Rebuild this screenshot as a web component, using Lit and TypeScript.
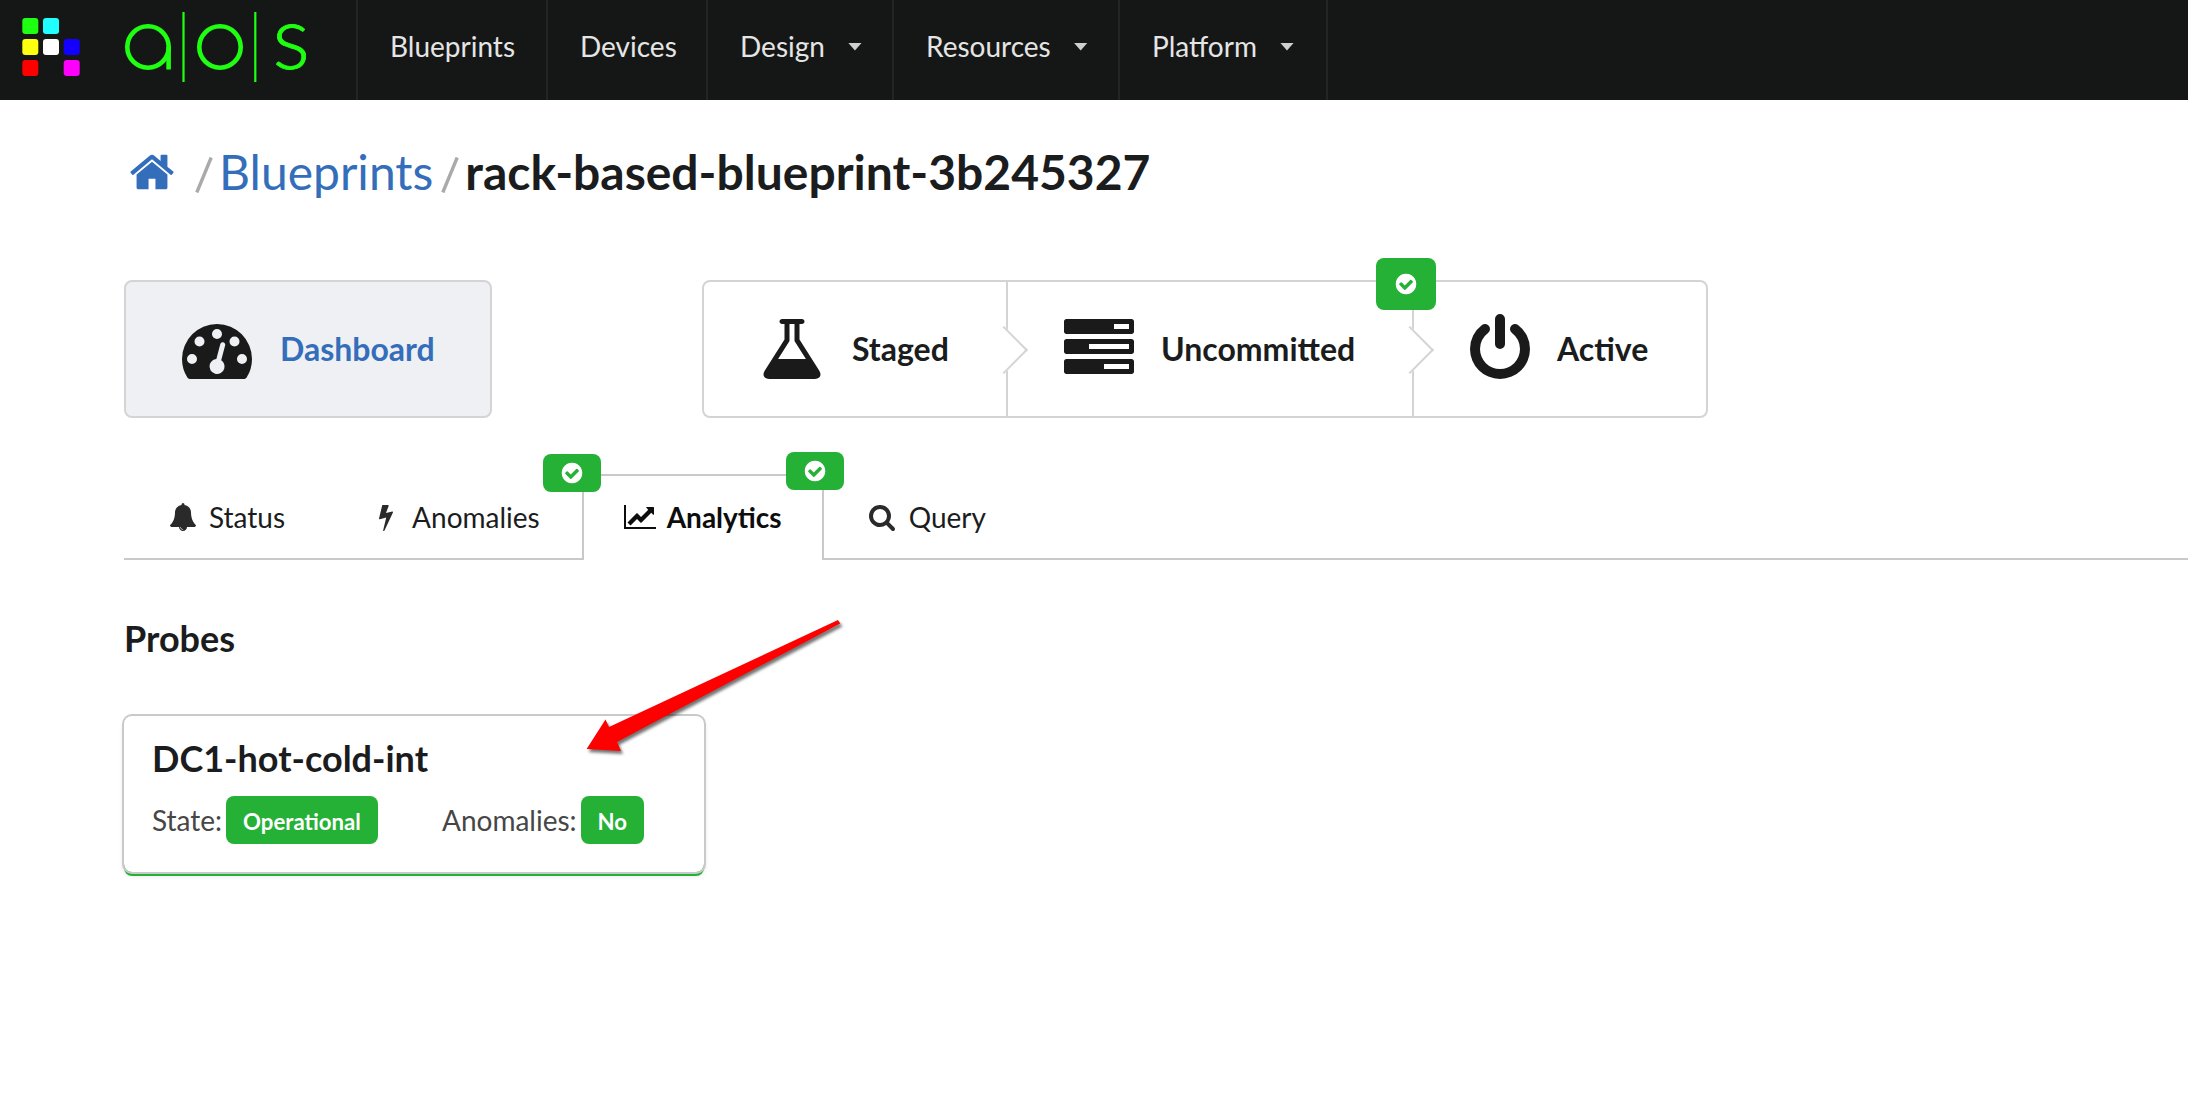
import { LitElement, html, svg, css } from "lit";
import { customElement, property } from "lit/decorators.js";

interface Glyph {
  box: string;
  d: string;
}

const GLYPHS: Record<string, Glyph> = {
  home: {
    box: "0 0 1792 1792",
    d: "M1472 992v480q0 26-19 45t-45 19h-384v-384h-256v384h-384q-26 0-45-19t-19-45v-480q0-1 .5-3t.5-3l575-474 575 474q1 2 1 6zm223-69l-62 74q-8 9-21 11h-3q-13 0-21-7l-692-577-692 577q-12 8-24 7-13-2-21-11l-62-74q-8-10-7-23.5t11-21.5l719-599q32-26 76-26t76 26l244 204v-195q0-14 9-23t23-9h192q14 0 23 9t9 23v408l219 182q10 8 11 21.5t-7 23.5z",
  },
  gauge: {
    box: "0 0 1792 1792",
    d: "M384 1152q0-53-37.5-90.5t-90.5-37.5-90.5 37.5-37.5 90.5 37.5 90.5 90.5 37.5 90.5-37.5 37.5-90.5zm192-448q0-53-37.5-90.5t-90.5-37.5-90.5 37.5-37.5 90.5 37.5 90.5 90.5 37.5 90.5-37.5 37.5-90.5zm428 481l101-382q6-26-7.5-48.5t-38.5-29.5-48 6.5-30 39.5l-101 382q-60 5-107 43.5t-63 98.5q-20 77 20 146t117 89 146-20 89-117q16-60-6-117t-72-91zm660-33q0-53-37.5-90.5t-90.5-37.5-90.5 37.5-37.5 90.5 37.5 90.5 90.5 37.5 90.5-37.5 37.5-90.5zm-640-640q0-53-37.5-90.5t-90.5-37.5-90.5 37.5-37.5 90.5 37.5 90.5 90.5 37.5 90.5-37.5 37.5-90.5zm448 192q0-53-37.5-90.5t-90.5-37.5-90.5 37.5-37.5 90.5 37.5 90.5 90.5 37.5 90.5-37.5 37.5-90.5zm320 448q0 261-141 483-19 29-54 29h-1402q-35 0-54-29-141-221-141-483 0-182 71-348t191-286 286-191 348-71 348 71 286 191 191 286 71 348z",
  },
  flask: {
    box: "0 0 1792 1792",
    d: "M1591 1448q56 89 21.5 152.5t-140.5 63.5h-1152q-106 0-140.5-63.5t21.5-152.5l503-793v-399h-64q-26 0-45-19t-19-45 19-45 45-19h512q26 0 45 19t19 45-19 45-45 19h-64v399zm-779-725l-272 429h712l-272-429-20-31v-436h-128v436z",
  },
  tasks: {
    box: "0 0 1792 1792",
    d: "M1024 1408h640v-128h-640v128zm-384-512h1024v-128h-1024v128zm640-512h384v-128h-384v128zm512 832v256q0 26-19 45t-45 19h-1664q-26 0-45-19t-19-45v-256q0-26 19-45t45-19h1664q26 0 45 19t19 45zm0-512v256q0 26-19 45t-45 19h-1664q-26 0-45-19t-19-45v-256q0-26 19-45t45-19h1664q26 0 45 19t19 45zm0-512v256q0 26-19 45t-45 19h-1664q-26 0-45-19t-19-45v-256q0-26 19-45t45-19h1664q26 0 45 19t19 45z",
  },
  power: {
    box: "0 0 1792 1792",
    d: "M1664 896q0 156-61 298t-164 245-245 164-298 61-298-61-245-164-164-245-61-298q0-182 80.5-343t226.5-270q43-32 95.5-25t83.5 50q32 42 24.5 94.5t-49.5 84.5q-98 74-151.5 181t-53.5 228q0 104 40.5 198.5t109.5 163.5 163.5 109.5 198.5 40.5 198.5-40.5 163.5-109.5 109.5-163.5 40.5-198.5q0-121-53.5-228t-151.5-181q-42-32-49.5-84.5t24.5-94.5q31-43 84-50t95 25q146 109 226.5 270t80.5 343zm-640-768v640q0 52-38 90t-90 38-90-38-38-90v-640q0-52 38-90t90-38 90 38 38 90z",
  },
  bell: {
    box: "0 0 1792 1792",
    d: "M912 1696q0-16-16-16-59 0-101.5-42.5t-42.5-101.5q0-16-16-16t-16 16q0 73 51.5 124.5t124.5 51.5q16 0 16-16zm816-288q0 52-38 90t-90 38h-448q0 106-75 181t-181 75-181-75-75-181h-448q-52 0-90-38t-38-90q50-42 91-88t85-119.5 74.5-158.5 50-206 19.5-260q0-152 117-282.5t307-158.5q-8-19-8-39 0-40 28-68t68-28 68 28 28 68q0 20-8 39 190 28 307 158.5t117 282.5q0 139 19.5 260t50 206 74.5 158.5 85 119.5 91 88z",
  },
  bolt: {
    box: "0 0 1792 1792",
    d: "M1333 566q18 20 7 44l-540 1157q-13 25-42 25-4 0-14-2-17-5-25.5-19t-4.5-30l197-808-406 101q-4 1-12 1-18 0-31-11-18-15-13-39l201-825q4-16 17-26t30-10h328q19 0 32 12.5t13 29.5q0 8-5 18l-171 463 396-98q8-2 12-2 19 0 34 17z",
  },
  chart: {
    box: "0 0 2048 1792",
    d: "M2048 1536v128h-2048v-1536h128v1408h1920zm-128-1248v435q0 21-19.5 29.5t-35.5-7.5l-121-121-633 633q-10 10-23 10t-23-10l-233-233-416 416-192-192 585-585q10-10 23-10t23 10l233 233 464-464-121-121q-16-16-7.5-35.5t29.5-19.5h435q14 0 23 9t9 23z",
  },
  search: {
    box: "0 0 1792 1792",
    d: "M1216 832q0-185-131.5-316.5t-316.5-131.5-316.5 131.5-131.5 316.5 131.5 316.5 316.5 131.5 316.5-131.5 131.5-316.5zm512 832q0 52-38 90t-90 38q-54 0-90-38l-343-342q-179 124-399 124-143 0-273.5-55.5t-225-150-150-225-55.5-273.5 55.5-273.5 150-225 225-150 273.5-55.5 273.5 55.5 225 150 150 225 55.5 273.5q0 220-124 399l343 343q37 37 37 90z",
  },
  check: {
    box: "0 0 1792 1792",
    d: "M1412 734q0-28-18-46l-91-90q-19-19-45-19t-45 19l-408 407-226-226q-19-19-45-19t-45 19l-91 90q-18 18-18 46 0 27 18 45l362 362q19 19 45 19 27 0 46-19l543-543q18-18 18-45zm252 162q0 209-103 385.5t-279.5 279.5-385.5 103-385.5-103-279.5-279.5-103-385.5 103-385.5 279.5-279.5 385.5-103 385.5 103 279.5 279.5 103 385.5z",
  },
};

@customElement("ui-icon")
export class UiIcon extends LitElement {
  @property() name = "";

  static styles = css`
    :host {
      display: inline-flex;
      flex: none;
      height: 1em;
    }
    .glyph {
      display: block;
      height: 1em;
      width: auto;
      fill: currentColor;
    }
  `;

  render() {
    const g = GLYPHS[this.name];
    return g
      ? html`<svg class="glyph" viewBox=${g.box} aria-hidden="true"><path d=${g.d} /></svg>`
      : null;
  }
}

@customElement("aos-logo")
export class AosLogo extends LitElement {
  static styles = css`
    :host {
      display: block;
      flex: none;
    }
    .logo {
      display: block;
    }
    .letter {
      font-family: Lato, sans-serif;
      font-weight: 300;
      font-size: 88px;
      fill: #1fff12;
      stroke: #1fff12;
      stroke-width: 0.8;
    }
    .ring,
    .stem {
      fill: none;
      stroke: #1fff12;
      stroke-width: 4.6;
    }
    .bar {
      fill: #1fff12;
    }
  `;

  render() {
    const tiles: [number, number, string][] = [
      [22.3, 18, "#1fff12"],
      [43, 18, "#20ffff"],
      [22.3, 39, "#ffff10"],
      [43, 39, "#ffffff"],
      [63.7, 39, "#1400ff"],
      [22.3, 60, "#ff0000"],
      [63.7, 60, "#ff00ff"],
    ];
    return html`<svg class="logo" width="356" height="100" viewBox="0 0 356 100" role="img">
      ${tiles.map(
        ([x, y, fill]) => svg`<rect x=${x} y=${y} width="16" height="16" rx="3" fill=${fill} />`,
      )}
      <circle class="ring" cx="148" cy="47" r="20.7" />
      <line class="stem" x1="168.6" y1="47" x2="168.6" y2="69.5" />
      <rect class="bar" x="182.4" y="12" width="2.2" height="70" />
      <circle class="ring" cx="220" cy="47" r="20.7" />
      <rect class="bar" x="254.2" y="12" width="2.2" height="70" />
      <text class="letter" x="272.6" y="69">s</text>
    </svg>`;
  }
}

@customElement("app-root")
export class AppRoot extends LitElement {
  static styles = css`
    :host {
      display: block;
      height: 1110px;
      overflow: hidden;
      position: relative;
      background: #fff;
      color: #1b1c1d;
      font-family: Lato, "Liberation Sans", sans-serif;
      font-size: 28px;
      line-height: 34px;
    }
    * {
      box-sizing: border-box;
    }
    .nav {
      display: grid;
      grid-template-columns: 358px 190px 160px 186px 226px 208px;
      height: 100px;
      background: #151716;
      color: #e5e5e5;
    }
    .brand,
    .nav-item {
      border-right: 2px solid #232525;
    }
    .nav-item {
      display: flex;
      align-items: center;
      padding: 0 0 9px 32px;
      white-space: nowrap;
    }
    .caret {
      width: 14px;
      height: 8px;
      margin: 2px 0 0 23px;
      background: #cfcfcf;
      clip-path: polygon(0 0, 100% 0, 50% 100%);
    }
    .page {
      padding: 42px 0 0 124px;
    }
    .crumbs {
      display: flex;
      align-items: center;
      height: 60px;
      font-size: 48px;
      line-height: 58px;
      white-space: nowrap;
    }
    .link {
      color: #346eba;
    }
    .home {
      margin: 0 19px 0 4px;
    }
    .slash {
      flex: none;
      width: 18px;
      height: 36px;
      margin-top: 5px;
    }
    .slash line {
      stroke: #aaa;
      stroke-width: 3.4;
    }
    .crumb-link {
      margin: 0 8px 0 6px;
    }
    .crumb-here {
      margin-left: 6px;
      font-weight: 700;
    }
    .modes {
      display: flex;
      gap: 210px;
      margin-top: 78px;
      font-size: 32px;
      font-weight: 700;
    }
    .panel {
      display: flex;
      height: 138px;
      border: 2px solid #d4d4d5;
      border-radius: 8px;
    }
    .dashboard {
      width: 368px;
      background: #eff0f3;
    }
    .step {
      position: relative;
      display: flex;
      align-items: center;
    }
    .step ui-icon {
      font-size: 70px;
      color: #1a1a1a;
    }
    .step-dashboard {
      padding-left: 56px;
      gap: 28px;
    }
    .step-staged {
      width: 304px;
      padding-left: 53px;
      gap: 25px;
    }
    .step-uncommitted {
      width: 406px;
      padding-left: 56px;
      gap: 27px;
    }
    .step-active {
      width: 292px;
      padding-left: 51px;
      gap: 22px;
    }
    .divided {
      border-right: 2px solid #d4d4d5;
    }
    .divided::after {
      content: "";
      position: absolute;
      z-index: 1;
      right: -15px;
      top: 51px;
      width: 32px;
      height: 32px;
      border: solid #d4d4d5;
      border-width: 0 2px 2px 0;
      background: #fff;
      transform: rotate(-45deg);
    }
    .badge {
      position: absolute;
      z-index: 2;
      display: flex;
      align-items: center;
      justify-content: center;
      width: 58px;
      height: 38px;
      border-radius: 8px;
      background: #25b036;
      color: #fff;
      font-size: 24px;
    }
    .step .badge ui-icon {
      font-size: 24px;
      color: #fff;
    }
    .badge-step {
      top: -24px;
      right: -24px;
      width: 60px;
      height: 52px;
    }
    .tabs {
      display: flex;
      height: 86px;
      margin-top: 56px;
    }
    .tab {
      position: relative;
      display: flex;
      align-items: center;
      gap: 10px;
      padding: 2px 42px 0;
      border-bottom: 2px solid #c9c9c9;
      white-space: nowrap;
    }
    .tab-icon {
      display: flex;
      justify-content: center;
      width: 33px;
      color: #2a2a2a;
    }
    .tab-active {
      padding: 0 40px 2px;
      border: 2px solid #c9c9c9;
      border-bottom: 0;
      color: #0d0d0d;
      font-weight: 700;
    }
    .tab-active .tab-icon {
      color: #0d0d0d;
    }
    .tab-rest {
      flex: 1;
      border-bottom: 2px solid #c9c9c9;
    }
    .badge-anomalies {
      right: -19px;
      top: -20px;
    }
    .badge-analytics {
      right: -22px;
      top: -24px;
    }
    .heading {
      margin: 56px 0 0;
      font-size: 36px;
      line-height: 44px;
      font-weight: 700;
    }
    .card {
      width: 580px;
      height: 156px;
      margin-top: 56px;
      padding: 20px 28px 0;
      border-radius: 8px;
      box-shadow: 0 0 0 2px #c9c9cb, 0 4px 0 0 #25b036, 0 3px 5px 1px rgba(0, 0, 0, 0.1);
    }
    .card-title {
      font-size: 36px;
      line-height: 44px;
      font-weight: 700;
    }
    .facts {
      display: flex;
      align-items: center;
      height: 48px;
      margin-top: 16px;
      color: #464646;
      white-space: nowrap;
    }
    .fact {
      display: flex;
      align-items: center;
      gap: 4px;
    }
    .fact-state {
      width: 290px;
    }
    .label {
      display: flex;
      align-items: center;
      height: 48px;
      padding: 3px 17px 0;
      border-radius: 8px;
      background: #25b036;
      color: #fff;
      font-size: 22.2px;
      line-height: 30px;
      font-weight: 700;
    }
    .pointer {
      position: absolute;
      left: 580px;
      top: 610px;
      z-index: 3;
      filter: drop-shadow(2px 3px 1.5px rgba(0, 0, 0, 0.55));
    }
  `;

  private readonly menu = [
    { text: "Blueprints", more: false },
    { text: "Devices", more: false },
    { text: "Design", more: true },
    { text: "Resources", more: true },
    { text: "Platform", more: true },
  ];

  private readonly tabs = [
    { text: "Status", icon: "bell", active: false, badge: "" },
    { text: "Anomalies", icon: "bolt", active: false, badge: "badge-anomalies" },
    { text: "Analytics", icon: "chart", active: true, badge: "badge-analytics" },
    { text: "Query", icon: "search", active: false, badge: "" },
  ];

  private slash() {
    return html`<svg class="slash" viewBox="0 0 18 36"><line x1="1.8" y1="35.5" x2="16.2" y2="0.5" /></svg>`;
  }

  private badge(kind: string) {
    return html`<span class="badge ${kind}"><ui-icon name="check"></ui-icon></span>`;
  }

  render() {
    return html`
      <nav class="nav">
        <aos-logo class="brand"></aos-logo>
        ${this.menu.map(
          (m) => html`<div class="nav-item">${m.text}${m.more ? html`<i class="caret"></i>` : null}</div>`,
        )}
      </nav>

      <main class="page">
        <div class="crumbs">
          <ui-icon class="home link" name="home"></ui-icon>
          ${this.slash()}
          <span class="crumb-link link">Blueprints</span>
          ${this.slash()}
          <span class="crumb-here">rack-based-blueprint-3b245327</span>
        </div>

        <div class="modes">
          <div class="panel dashboard">
            <div class="step step-dashboard"><ui-icon name="gauge"></ui-icon><span class="link">Dashboard</span></div>
          </div>
          <div class="panel">
            <div class="step step-staged divided"><ui-icon name="flask"></ui-icon><span>Staged</span></div>
            <div class="step step-uncommitted divided">
              <ui-icon name="tasks"></ui-icon><span>Uncommitted</span>${this.badge("badge-step")}
            </div>
            <div class="step step-active"><ui-icon name="power"></ui-icon><span>Active</span></div>
          </div>
        </div>

        <div class="tabs">
          ${this.tabs.map(
            (t) => html`<div class="tab ${t.active ? "tab-active" : ""}"><span class="tab-icon"><ui-icon name=${t.icon}></ui-icon></span><span>${t.text}</span>${t.badge ? this.badge(t.badge) : null}</div>`,
          )}
          <div class="tab-rest"></div>
        </div>

        <h2 class="heading">Probes</h2>
        <section class="card">
          <div class="card-title">DC1-hot-cold-int</div>
          <div class="facts">
            <div class="fact fact-state">State: <span class="label">Operational</span></div>
            <div class="fact">Anomalies: <span class="label">No</span></div>
          </div>
        </section>
      </main>

      <svg class="pointer" width="270" height="150" viewBox="580 610 270 150" aria-hidden="true">
        <polygon fill="#ff0000" points="586.6,749 605.5,719.5 609,727 838,620 840.3,623.5 617,742 621,751" />
      </svg>
    `;
  }
}
